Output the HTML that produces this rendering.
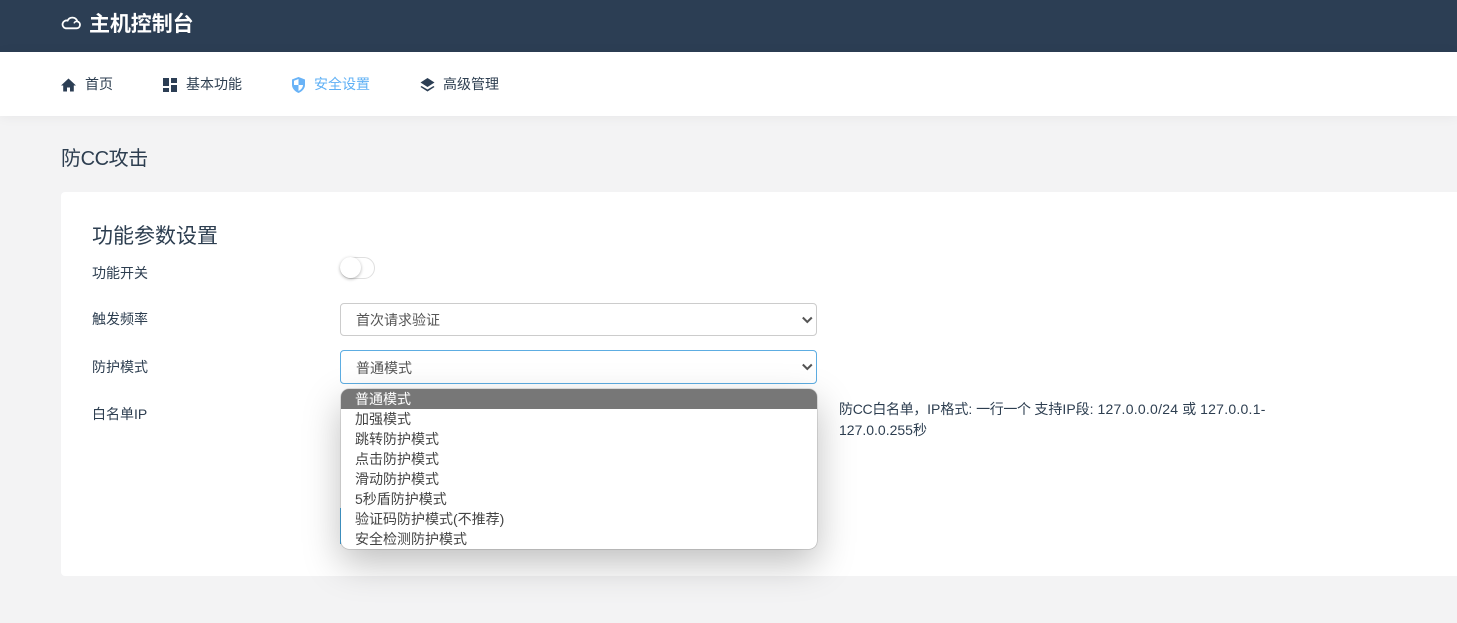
<!DOCTYPE html>
<html lang="zh-CN">
<head>
<meta charset="utf-8">
<title>防CC攻击</title>
<style>
html,body{margin:0;padding:0;width:1457px;height:623px;overflow:hidden;background:#f3f3f4;}
body{position:relative;font-family:"Liberation Sans","Noto Sans CJK SC",sans-serif;font-size:14px;color:#2d3e50;}
.a{position:absolute;white-space:nowrap;}
svg{display:block;position:absolute;}
.hdr{left:0;top:0;width:1457px;height:52px;background:#2c3e54;}
.nav{left:0;top:52px;width:1457px;height:64px;background:#fff;box-shadow:0 1px 12px rgba(0,0,0,.05);}
.card{left:61px;top:192px;width:1396px;height:384px;background:#fff;border-radius:4px 0 0 4px;}
.lbl{line-height:20px;height:20px;}
.sel{left:340px;width:475px;background:#fff;border:1px solid #ccc;border-radius:4px;}
.sel span{position:absolute;left:15px;top:0;color:#555;}
.opt{position:absolute;left:0;width:476px;height:20px;line-height:20px;padding-left:14px;box-sizing:border-box;color:#444;}
</style>
</head>
<body>
<div class="a hdr"></div>
<svg style="left:61px;top:16px" width="20" height="14" viewBox="0 0 20 14"><path d="M4.500 12.300h11a3.500 3.500 0 0 0 .8-6.900A5.200 5.200 0 0 0 6.600 4.600 3.900 3.900 0 0 0 4.500 12.300z" fill="none" stroke="#fff" stroke-width="1.800"/><path d="M16.300 5.400a3.200 3.200 0 0 0-3.300 2" fill="none" stroke="#fff" stroke-width="1.400"/></svg>
<div class="a" style="left:89px;top:10px;font-size:21px;line-height:30px;font-weight:700;color:#fff;letter-spacing:-.1px">主机控制台</div>

<div class="a nav"></div>
<svg style="left:61px;top:78px" width="15" height="14" viewBox="0 0 15 14"><path d="M7.500 .5 0 7.500h2.200v6h3.800V9.500h3v4h3.800v-6H15z" fill="#2c3e54"/></svg>
<div class="a lbl" style="left:85px;top:74px">首页</div>
<svg style="left:163px;top:78px" width="14" height="14" viewBox="0 0 14 14"><path d="M0 0h6v8H0zM8 0h6v5H8zM8 7h6v7H8zM0 10h6v4H0z" fill="#2c3e54"/></svg>
<div class="a lbl" style="left:186px;top:74px">基本功能</div>
<svg style="left:291px;top:77px" width="15" height="16" viewBox="0 0 15 16"><path d="M7.500 0 1 2.500V8c0 3.500 3 6.500 6.500 8 3.500-1.500 6.500-4.500 6.500-8V2.500z" fill="#69b3f7"/><path d="M7.500 2 3 3.700V8h4.500zM7.500 8v6c2.500-1.300 4.500-3.500 4.500-6z" fill="#fff"/></svg>
<div class="a lbl" style="left:314px;top:74px;color:#5fb0f5">安全设置</div>
<svg style="left:420px;top:78px" width="15" height="14" viewBox="0 0 15 14"><path d="M7.500 0 14.500 4.500 7.500 9 .5 4.500z" fill="#2c3e54"/><path d="M1.500 8 .5 9 7.500 13.500 14.500 9 13.500 8 7.500 11.500z" fill="#2c3e54"/></svg>
<div class="a lbl" style="left:443px;top:74px">高级管理</div>

<div class="a" style="left:61px;top:146px;font-size:20px;line-height:26px;color:#2d3e50;letter-spacing:-.4px">防CC攻击</div>

<div class="a card"></div>
<div class="a" style="left:92px;top:222px;font-size:21px;line-height:30px;color:#2d3e50">功能参数设置</div>

<div class="a lbl" style="left:92px;top:263px">功能开关</div>
<div class="a" style="left:340px;top:257px;width:33px;height:20px;border:1px solid #dfdfdf;border-radius:11px;background:#fff"></div>
<div class="a" style="left:340px;top:257px;width:21px;height:21px;border-radius:50%;background:#fff;box-shadow:0 1px 3px rgba(0,0,0,.3)"></div>

<div class="a lbl" style="left:92px;top:309px">触发频率</div>
<div class="a sel" style="top:303px;height:31px;line-height:33px"><span>首次请求验证</span></div>
<svg style="left:802px;top:316px" width="12" height="9" viewBox="0 0 12 9"><path d="M.8 1.500 5.300 6 9.800 1.500" fill="none" stroke="#555" stroke-width="2"/></svg>

<div class="a lbl" style="left:92px;top:357px">防护模式</div>
<div class="a sel" style="top:350px;height:32px;line-height:34px;border-color:#5dade2"><span>普通模式</span></div>
<svg style="left:802px;top:363px" width="12" height="9" viewBox="0 0 12 9"><path d="M.8 1.500 5.300 6 9.800 1.500" fill="none" stroke="#555" stroke-width="2"/></svg>

<div class="a lbl" style="left:92px;top:404px">白名单IP</div>

<div class="a" style="left:839px;top:399px;width:440px;line-height:21px;white-space:nowrap"><span style="letter-spacing:-.3px">防CC白名单，</span>IP格式: <span style="letter-spacing:-.4px">一行一个</span> 支持IP段: <span style="letter-spacing:.25px">127.0.0.0/24</span> 或 <span style="letter-spacing:.25px">127.0.0.1-</span><br>127.0.0.255秒</div>

<div class="a" style="left:341px;top:389px;width:476px;height:160px;background:#fff;border-radius:8px;overflow:hidden;box-shadow:0 0 1px rgba(0,0,0,.7),0 14px 38px rgba(0,0,0,.26)">
<div class="opt" style="top:0;background:#777;color:#fff">普通模式</div>
<div class="opt" style="top:20px">加强模式</div>
<div class="opt" style="top:40px">跳转防护模式</div>
<div class="opt" style="top:60px">点击防护模式</div>
<div class="opt" style="top:80px">滑动防护模式</div>
<div class="opt" style="top:100px">5秒盾防护模式</div>
<div class="opt" style="top:120px">验证码防护模式(不推荐)</div>
<div class="opt" style="top:140px">安全检测防护模式</div>
</div>
<div class="a" style="left:340px;top:508px;width:1px;height:36px;background:#3c8dbc"></div>
</body>
</html>
